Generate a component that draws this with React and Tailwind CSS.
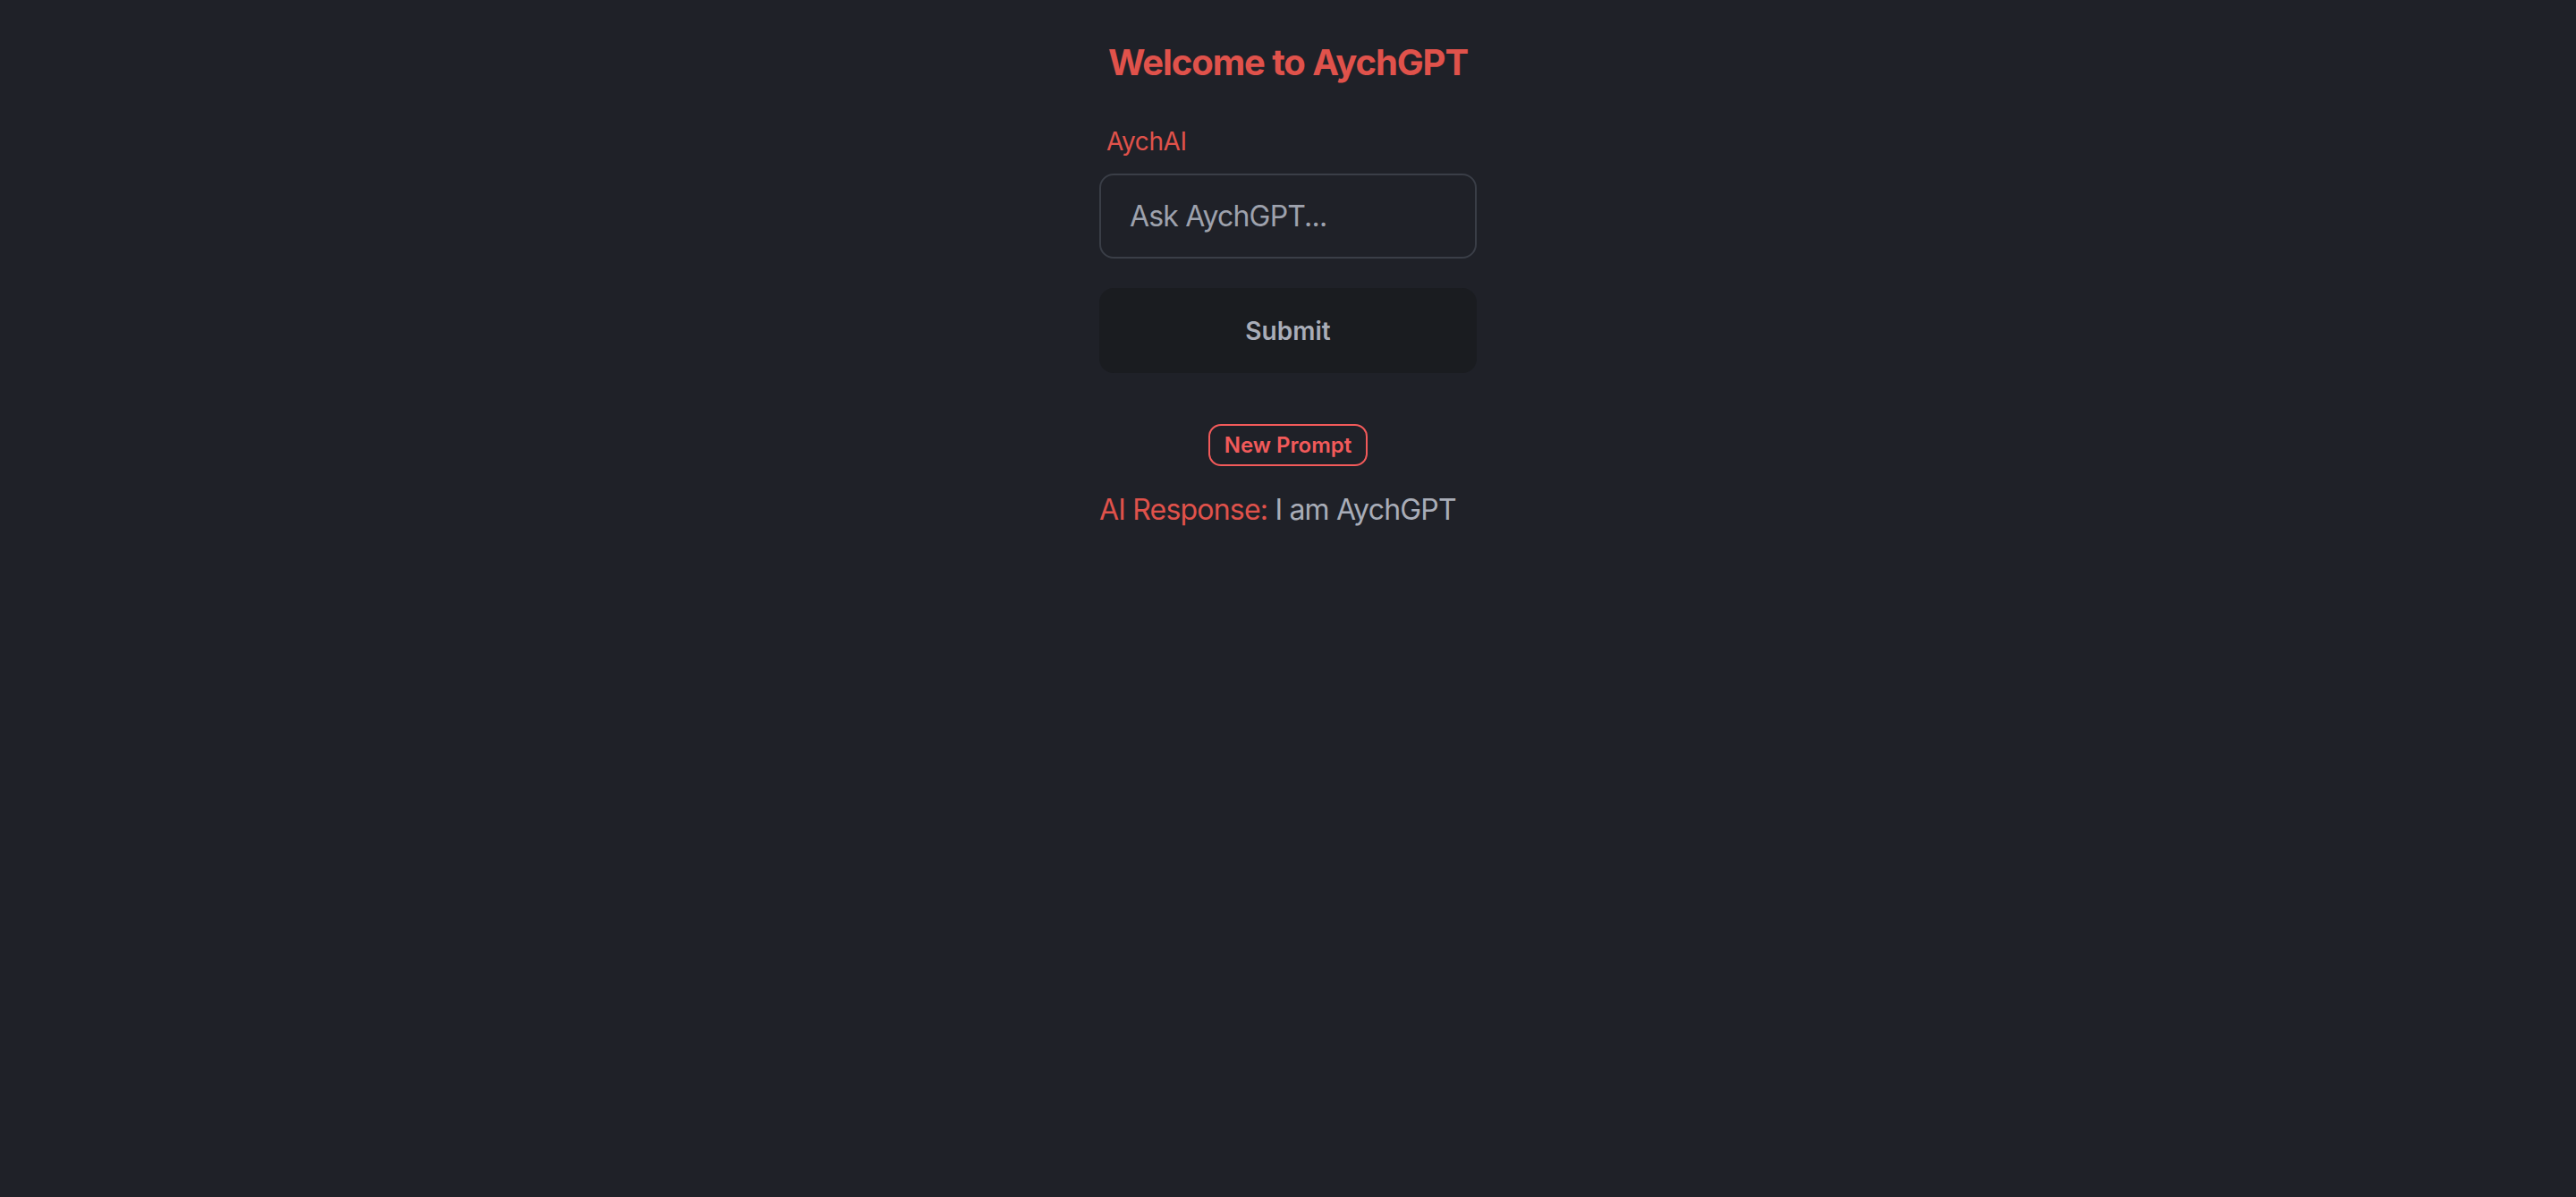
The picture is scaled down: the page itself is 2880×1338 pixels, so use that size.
import { useState } from 'react';

function App() {
  const [prompt, setPrompt] = useState('');

  return (
    <div className="min-h-[1338px] w-full bg-[#1f2128] font-['Inter','Liberation_Sans',sans-serif]">
      <div className="mx-auto flex w-[422px] flex-col pt-[46px]">
        <h1 className="text-center text-[40px] leading-[48px] font-bold tracking-[-1.1px] text-[#e0524b]">
          Welcome to AychGPT
        </h1>

        <label className="mt-[46px] pl-[8px] text-[28px] leading-[36px] tracking-[-0.4px] text-[#e0524b]">
          AychAI
        </label>

        <input
          type="text"
          value={prompt}
          onChange={(e) => setPrompt(e.target.value)}
          placeholder="Ask AychGPT..."
          className="mt-[18px] h-[95px] w-full rounded-[16px] border-2 border-[#3a3e47] bg-transparent px-[32px] text-[32px] tracking-[-0.8px] text-[#a0a4ae] placeholder:text-[#9ea2ad] outline-none"
        />

        <button className="mt-[33px] h-[95px] w-full rounded-[16px] bg-[#1a1c20] text-[28px] font-semibold text-[#a9adb8]">
          Submit
        </button>

        <div className="mt-[57px] flex justify-center">
          <button className="h-[47px] w-[178px] rounded-[14px] border-2 border-[#f25a5a] text-[24px] font-semibold text-[#f25a5a]">
            New Prompt
          </button>
        </div>

        <p className="mt-[29px] text-[32px] leading-[40px] tracking-[-0.8px]">
          <span className="text-[#e0524b]">AI Response:</span>{' '}
          <span className="text-[#a9adb8]">I am AychGPT</span>
        </p>
      </div>
    </div>
  );
}

export default App;
